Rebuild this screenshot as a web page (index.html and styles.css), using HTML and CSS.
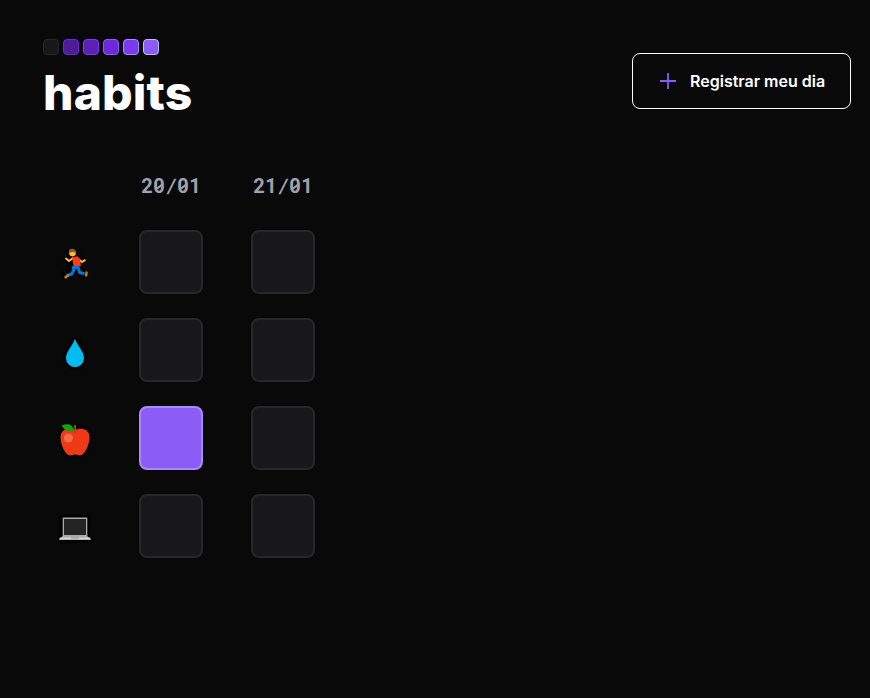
FILE: index.html
```html
<!DOCTYPE html>
<html lang="pt-BR">
<head>
<meta charset="utf-8">
<title>habits</title>
<link rel="stylesheet" href="styles.css">
</head>
<body>
<header class="header">
  <div class="brand">
    <div class="levels"><i class="l0"></i><i class="l1"></i><i class="l2"></i><i class="l3"></i><i class="l4"></i><i class="l5"></i></div>
    <h1>habits</h1>
  </div>
  <button class="register" type="button">
    <svg class="plus" viewBox="0 0 18 18"><path d="M9 1v16M1 9h16"/></svg>
    <span>Registrar meu dia</span>
  </button>
</header>
<main class="table">
  <div class="habits">
    <div class="habit"><svg viewBox="0 0 50 45">
      <path class="halo" d="M22 12l-5 8 5 5-3 6-6 5M22 12l3 8 9-1M25 25l4 6 7 4"/>
      <path fill="none" stroke="#ffbd2e" stroke-width="2" stroke-linecap="round" stroke-linejoin="round" d="M23 18l-4 3-3-2.500M29 19.500l3 2.500 2.800-1.800"/>
      <circle cx="22.500" cy="13" r="3.400" fill="#ffbd2e"/>
      <path fill="#8e562e" d="M19 12c-.5-2.500 1.500-3.500 3.500-3.300 2.300.2 3.300 1.500 3 4l-3.500-.9-1.500 1z"/>
      <path fill="#ff3b1f" d="M22 17.500l5.500-1.200 2.500 3 .8 7-7 .7z"/>
      <path fill="none" stroke="#0078d7" stroke-width="3" stroke-linejoin="round" d="M29 27l-7 .8M24.800 27.500l-3 6.500-5 1.500M28 27.500l1.700 5 4.800 1.200"/>
      <path fill="none" stroke="#ce8417" stroke-width="2.400" stroke-linecap="round" d="M18 35.500l-2.500 1.700M36.500 32.500l-.3 3M15.500 37.200h.5"/>
    </svg></div>
    <div class="habit"><svg viewBox="0 -2 50 45">
      <path class="halo" d="M25 10c-3 7-8 12-8 18a8 8 0 0 0 16 0c0-6-5-11-8-18z"/>
      <path fill="#00bcf2" d="M25 8.700c-2.300 7.100-9 12.700-9 19.500a9 9 0 0 0 18 0c0-6.800-6.700-12.400-9-19.500z"/>
    </svg></div>
    <div class="habit"><svg viewBox="0 1 50 45">
      <path class="halo" d="M25 15c-5-3-13-1-13 7 0 7 5 17 9 17l4-1 4 1c5 0 9-10 9-17 0-8-8-10-13-7z"/>
      <path fill="#f03a17" d="M25 15.300c-5-3-14.500-1.800-14.500 7 0 7.500 5 18.300 9.500 18.300 2 0 3-1 5-1s3 1 5 1c4.500 0 9.500-10.800 9.500-18.300 0-8.800-9.500-10-14.500-7z"/>
      <path fill="#8e562e" d="M24.200 10h1.800v8h-1.800z"/>
      <path fill="#16a10e" d="M11.700 10.500c5-2.200 11-2 12.500 5.500-5 1.700-9.500.3-12.500-5.500z"/>
      <circle cx="18.300" cy="23" r="4.500" fill="#f4684d"/>
    </svg></div>
    <div class="habit"><svg viewBox="0 -1 50 45">
      <path class="halo" d="M13 13h24v18l3 3H10l3-3z"/>
      <path fill="#aaa" d="M12.700 12.500h24.600v18.500l3.300 3.500H9.400l3.300-3.500z"/>
      <path fill="#242424" d="M14 14h22v16H14z"/>
      <path fill="#d4d4d4" d="M10 32.500h30l1 2.200H9z"/>
      <path fill="#999" d="M21 32.500h8v1h-8z"/>
    </svg></div>
  </div>
  <div class="day"><div class="date"><b>2</b><b class="zero">0</b><b class="slash">/</b><b class="zero">0</b><b>1</b></div><div class="cell"></div><div class="cell"></div><div class="cell done"></div><div class="cell"></div></div>
  <div class="day"><div class="date"><b>2</b><b>1</b><b class="slash">/</b><b class="zero">0</b><b>1</b></div><div class="cell"></div><div class="cell"></div><div class="cell"></div><div class="cell"></div></div>
</main>
</body>
</html>
```
FILE: styles.css
```css
* { box-sizing: border-box; }
body { margin: 0; background: #09090a; color: #fff; font-family: Inter, sans-serif; height: 698px; overflow: hidden; }
.header { display: flex; justify-content: space-between; align-items: flex-start; padding: 39px 19px 0 43px; }
.levels { display: flex; gap: 4px; }
.levels i { width: 16px; height: 16px; border-width: 1px; border-style: solid; border-radius: 4px; }
.l0 { background: #18181b; border-color: #27272a; }
.l1 { background: #4c1d95; border-color: #6d28d9; }
.l2 { background: #5b21b6; border-color: #7c3aed; }
.l3 { background: #6d28d9; border-color: #8b5cf6; }
.l4 { background: #7c3aed; border-color: #a78bfa; }
.l5 { background: #8b5cf6; border-color: #c4b5fd; }
h1 { margin: 8px 0 0; font-size: 48px; line-height: 60px; font-weight: 800; letter-spacing: .15px; }
.register { display: flex; align-items: center; gap: 13px; width: 219px; height: 56px; margin-top: 14px; padding: 0 0 0 26px; background: none; border: 1px solid #fff; border-radius: 8px; color: #fff; font: 600 16px/24px Inter, sans-serif; white-space: nowrap; }
.plus { width: 18px; height: 18px; fill: none; stroke: #8b5cf6; stroke-width: 1.8; }
.table { display: flex; gap: 48px; padding: 51px 0 0 43px; }
.habits, .day { display: flex; flex-direction: column; gap: 24px; width: 64px; }
.habits { padding-top: 56px; margin-right: -16px; }
.habit { display: grid; place-items: center; height: 64px; }
.habit svg { width: 50px; height: 45px; overflow: visible; }
.halo { fill: none; stroke: #000; stroke-width: 6; stroke-linejoin: round; filter: blur(1px); }
.date { display: flex; justify-content: center; height: 32px; line-height: 25px; font-family: Roboto, sans-serif; font-size: 20px; color: #a1a1aa; }
.date b { width: 12px; font-weight: 700; text-align: center; }
.date .slash { font-weight: 600; transform: skewX(-9deg); }
.zero { position: relative; }
.zero::after { content: ""; position: absolute; left: 3px; top: 12px; width: 6px; height: 1.5px; background: #a1a1aa; transform: rotate(-38deg); }
.cell { height: 64px; border: 2px solid #27272a; border-radius: 8px; background: #18181b; }
.done { background: #8b5cf6; border-color: #a78bfa; }
```
